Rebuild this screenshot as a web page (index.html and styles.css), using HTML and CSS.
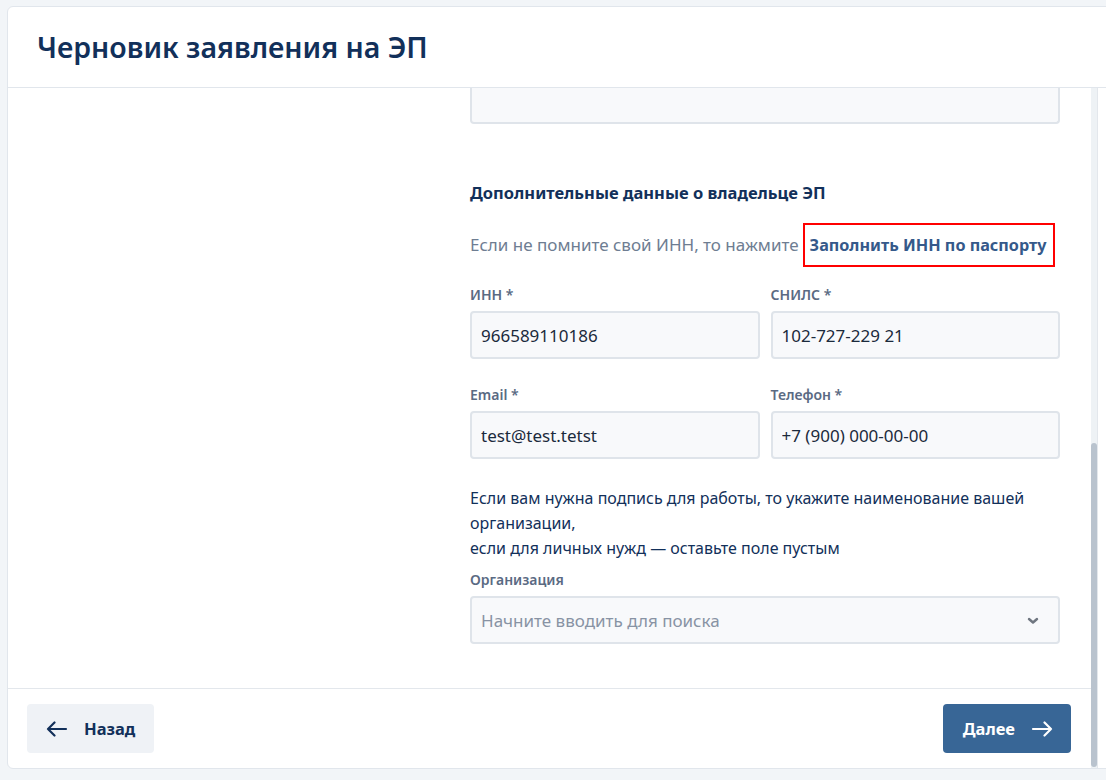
FILE: index.html
```html
<!DOCTYPE html>
<html lang="ru">
<head>
  <meta charset="UTF-8">
  <meta name="viewport" content="width=device-width, initial-scale=1.0">
  <title>Черновик заявления на ЭП</title>
  <link rel="stylesheet" href="styles.css">
</head>
<body>

  <div class="card">
    <div class="card-header">
      <h1>Черновик заявления на ЭП</h1>
    </div>

    <div class="card-main">
      <div class="card-content">
        <div class="card-body">
          <aside class="steps"></aside>

          <div class="form">
            <!-- хвост поля из предыдущего блока, прокручен вверх -->
            <div class="prev-input"></div>

            <h3 class="section-title">Дополнительные данные о владельце ЭП</h3>
            <div class="hint">
              <span>Если не помните свой ИНН, то нажмите</span>
              <a href="#" class="link-inn">Заполнить ИНН по паспорту</a>
            </div>

            <div class="row">
              <div class="field">
                <label>ИНН *</label>
                <input type="text" value="966589110186">
              </div>
              <div class="field">
                <label>СНИЛС *</label>
                <input type="text" value="102-727-229 21">
              </div>
            </div>
            <div class="row">
              <div class="field">
                <label>Email *</label>
                <input type="text" value="test@test.tetst">
              </div>
              <div class="field">
                <label>Телефон *</label>
                <input type="text" value="+7 (900) 000-00-00">
              </div>
            </div>

            <p class="org-text">Если вам нужна подпись для работы, то укажите наименование вашей организации,<br>если для личных нужд — оставьте поле пустым</p>

            <div class="field">
              <label>Организация</label>
              <div class="select">
                <input type="text" placeholder="Начните вводить для поиска">
                <svg class="chevron" width="12" height="8" viewBox="0 0 12 8"><path d="M2 2 L6 5.5 L10 2" fill="none" stroke="#6f7680" stroke-width="2.4" stroke-linecap="round" stroke-linejoin="round"/></svg>
              </div>
            </div>
          </div>
        </div>

        <div class="card-footer">
          <button class="btn btn-back">
            <svg width="22" height="16" viewBox="0 0 22 16"><path d="M20 8 H2 M8.5 1.5 L2 8 L8.5 14.5" fill="none" stroke="#12305a" stroke-width="2.2" stroke-linecap="round" stroke-linejoin="round"/></svg>
            Назад
          </button>
          <button class="btn btn-next">
            Далее
            <svg width="22" height="16" viewBox="0 0 22 16"><path d="M2 8 H20 M13.5 1.5 L20 8 L13.5 14.5" fill="none" stroke="#fff" stroke-width="2.2" stroke-linecap="round" stroke-linejoin="round"/></svg>
          </button>
        </div>
      </div>

      <div class="scrollbar">
        <div class="scrollbar-thumb"></div>
      </div>
    </div>
  </div>

</body>
</html>
```

FILE: styles.css
```css
html, body {
  height: 100%;
  overflow: hidden;
}
body {
  font-family: "Noto Sans", Arial, sans-serif;
  background: #f2f5f8;
  margin: 0;
  padding: 6px 0 0 7px;
  color: #12305a;
}
.card {
  width: 1120px;
  height: 763px;
  background: #fff;
  border: 1px solid #e1e6ec;
  border-radius: 6px 0 0 6px;
  display: flex;
  flex-direction: column;
  box-sizing: border-box;
}
.card-header {
  height: 80px;
  flex: none;
  border-bottom: 1px solid #e1e6ec;
  display: flex;
  align-items: center;
  padding-left: 29px;
}
h1 {
  margin: 0;
  font-size: 28.5px;
  font-weight: 600;
  color: #12305a;
}
.card-main {
  flex: 1;
  display: flex;
  min-height: 0;
}
.card-content {
  width: 1083px;
  display: flex;
  flex-direction: column;
}
.scrollbar {
  width: 6px;
  background: #eef2f5;
  border-right: 1px solid #e3e7ec;
  display: flex;
  flex-direction: column;
}
.scrollbar-thumb {
  margin-top: 355px;
  height: 324px;
  background: #b9c3ce;
  border-radius: 3px;
}
.card-body {
  flex: 1;
  overflow: hidden;
  display: grid;
  grid-template-columns: 462px 590px;
  align-content: start;
}
.prev-input {
  height: 34px;
  background: #f8f9fb;
  border: 2px solid #dfe4ea;
  border-top: none;
  border-radius: 0 0 4px 4px;
}
.section-title {
  margin: 59px 0 20px;
  font-size: 16.5px;
  font-weight: 700;
  line-height: 20px;
  color: #12305a;
}
.hint {
  display: flex;
  align-items: center;
  gap: 4px;
  margin-bottom: 20px;
  font-size: 17px;
  line-height: 22px;
  color: #6e7d92;
  white-space: nowrap;
}
.hint > * {
  flex: none;
}
.link-inn {
  padding: 9px 7px 9px 5px;
  border: 2px solid #ff0000;
  color: #35598a;
  font-size: 16.2px;
  font-weight: 700;
  text-decoration: none;
}
.row {
  display: flex;
  gap: 11px;
  margin-bottom: 28px;
}
.row .field {
  flex: 1;
}
.row + .row {
  margin-bottom: 27px;
}
label {
  display: block;
  font-size: 14px;
  font-weight: 600;
  line-height: 16px;
  margin-bottom: 8px;
  color: #5a6a83;
}
input {
  width: 100%;
  height: 48px;
  box-sizing: border-box;
  padding: 0 9px;
  font-family: inherit;
  font-size: 17px;
  color: #1b2a3c;
  background: #f8f9fb;
  border: 2px solid #dfe4ea;
  border-radius: 4px;
  outline: none;
}
input::placeholder {
  color: #8893a4;
}
.org-text {
  margin: 0 0 11px;
  font-size: 16px;
  line-height: 25px;
  color: #12305a;
}
.select {
  position: relative;
}
.chevron {
  position: absolute;
  right: 21px;
  top: 21px;
}
.card-footer {
  flex: none;
  border-top: 1px solid #e3e7ec;
  padding: 15px 20px 15px 19px;
  display: flex;
  justify-content: space-between;
}
.btn {
  height: 49px;
  border: none;
  border-radius: 4px;
  font-family: inherit;
  font-size: 16.5px;
  font-weight: 700;
  display: flex;
  align-items: center;
  gap: 16px;
  cursor: pointer;
}
.btn-back {
  background: #eff2f6;
  color: #12305a;
  padding: 0 19px;
}
.btn-next {
  background: #386696;
  color: #fff;
  padding: 0 18px 0 20px;
}
```
